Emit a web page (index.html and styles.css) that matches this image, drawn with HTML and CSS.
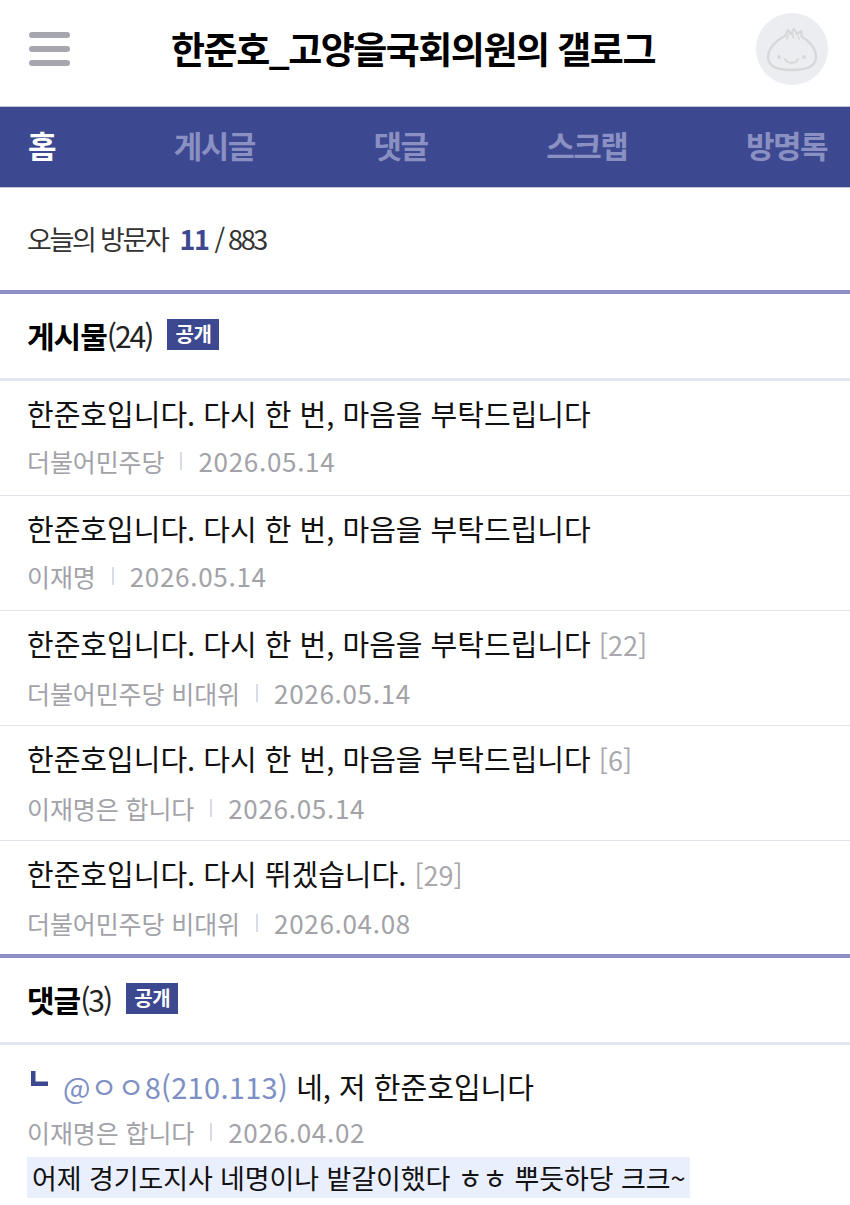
FILE: index.html
```html
<!DOCTYPE html>
<html lang="ko">
<head>
	<meta charset="UTF-8">
	<meta name="viewport" content="width=device-width, initial-scale=1.0">
	<title>한준호_고양을국회의원의 갤로그</title>
	<link rel="stylesheet" href="styles.css">
</head>
<body>
	<header class="top">
		<div class="menu"><span></span><span></span><span></span></div>
		<h1 class="blogName">한준호_고양을국회의원의 갤로그</h1>
		<div class="avatar">
			<svg width="52" height="46" viewBox="0 0 52 46" fill="none" stroke="#d8d8da" stroke-width="2.4" stroke-linecap="round" stroke-linejoin="round">
				<path d="M19 10 L22 4 L25 8 L28 3 L31 8 L35 5 L36 11 C44 15 50 23 50 31 C50 40 42 44 26 44 C10 44 2 40 2 31 C2 23 10 14 19 10 Z"/>
				<path d="M21 13 L22 9 M27 12 L27 8 M33 13 L32 10" stroke-width="1.6"/>
				<path d="M19 33 C21 38 30 38 32 33" stroke-width="2"/>
				<circle cx="13" cy="31" r="2" fill="#d8d8da" stroke="none"/>
				<circle cx="38" cy="31" r="2" fill="#d8d8da" stroke="none"/>
			</svg>
		</div>
	</header>

	<nav class="tabs">
		<div class="tab active">홈</div>
		<div class="tab">게시글</div>
		<div class="tab">댓글</div>
		<div class="tab">스크랩</div>
		<div class="tab">방명록</div>
	</nav>

	<div class="visitors">
		<span class="visitLabel">오늘의 방문자</span>
		<strong class="today">11</strong>
		<span class="total">/ 883</span>
	</div>

	<section class="block">
		<div class="blockHead">
			<h2>게시물<span class="count">(24)</span></h2>
			<span class="badge">공개</span>
		</div>
		<ul class="posts">
			<li>
				<div class="postTitle">한준호입니다. 다시 한 번, 마음을 부탁드립니다</div>
				<div class="meta"><span class="author">더불어민주당</span><i class="sep"></i><span class="date">2026.05.14</span></div>
			</li>
			<li>
				<div class="postTitle">한준호입니다. 다시 한 번, 마음을 부탁드립니다</div>
				<div class="meta"><span class="author">이재명</span><i class="sep"></i><span class="date">2026.05.14</span></div>
			</li>
			<li>
				<div class="postTitle">한준호입니다. 다시 한 번, 마음을 부탁드립니다 <span class="reply">[22]</span></div>
				<div class="meta"><span class="author">더불어민주당 비대위</span><i class="sep"></i><span class="date">2026.05.14</span></div>
			</li>
			<li>
				<div class="postTitle">한준호입니다. 다시 한 번, 마음을 부탁드립니다 <span class="reply">[6]</span></div>
				<div class="meta"><span class="author">이재명은 합니다</span><i class="sep"></i><span class="date">2026.05.14</span></div>
			</li>
			<li>
				<div class="postTitle">한준호입니다. 다시 뛰겠습니다. <span class="reply">[29]</span></div>
				<div class="meta"><span class="author">더불어민주당 비대위</span><i class="sep"></i><span class="date">2026.04.08</span></div>
			</li>
		</ul>
	</section>

	<section class="block">
		<div class="blockHead">
			<h2>댓글<span class="count">(3)</span></h2>
			<span class="badge">공개</span>
		</div>
		<div class="comment">
			<div class="postTitle commentLine">
				<svg class="arrow" width="17" height="15" viewBox="0 0 17 15"><path d="M0 0 H4.500 V10.500 H17 V15 H0 Z" fill="#3c4890"/></svg>
				<div><span class="mention">@ㅇㅇ8(210.113)</span> 네, 저 한준호입니다</div>
			</div>
			<div class="meta"><span class="author">이재명은 합니다</span><i class="sep"></i><span class="date">2026.04.02</span></div>
			<div class="origin">어제 경기도지사 네명이나 밭갈이했다 ㅎㅎ 뿌듯하당 크크~</div>
		</div>
	</section>
</body>
</html>
```

FILE: styles.css
```css
* {
	box-sizing: border-box;
}

body {
	margin: 0;
	background: #fff;
	color: #000;
	font-family: "Noto Sans CJK KR", "Noto Sans", sans-serif;
	overflow: hidden;
}

h1, h2, ul {
	margin: 0;
	padding: 0;
}

.top {
	display: flex;
	align-items: center;
	justify-content: space-between;
	height: 107px;
	padding: 0 22px 8px 29px;
	border-bottom: 1px solid #c4c7dc;
}

.menu {
	display: flex;
	flex-direction: column;
	gap: 8px;
	width: 41px;
}

.menu span {
	height: 6px;
	border-radius: 3px;
	background: #a6a6ae;
}

.blogName {
	margin: 0 0 3px 0;
	font-size: 37px;
	font-weight: 700;
	letter-spacing: -1.5px;
	line-height: 50px;
}

.avatar {
	display: flex;
	align-items: center;
	justify-content: center;
	width: 72px;
	height: 72px;
	border-radius: 50%;
	background: #ecedf0;
}

.tabs {
	display: flex;
	align-items: center;
	justify-content: space-between;
	height: 81px;
	padding: 0 23px 4px 28px;
	background: #3c4890;
	border-bottom: 1px solid #c4c7dc;
}

.tab {
	color: #8a90c2;
	font-size: 31px;
	font-weight: 700;
	letter-spacing: -1.5px;
	line-height: 40px;
}

.tab.active {
	color: #fff;
}

.visitors {
	display: flex;
	align-items: center;
	height: 102px;
	padding: 0 0 2px 27px;
	font-size: 27px;
	letter-spacing: -2.3px;
	color: #333;
}

.today {
	margin-left: 12px;
	color: #3c4890;
	letter-spacing: -1.5px;
}

.total {
	margin-left: 6px;
}

.block {
	border-top: 4px solid #8a90c2;
}

.blockHead {
	display: flex;
	align-items: center;
	height: 87px;
	padding: 0 0 3px 27px;
	border-bottom: 3px solid #e3e5f0;
}

.blockHead h2 {
	font-size: 30px;
	font-weight: 700;
	letter-spacing: -1px;
}

.count {
	font-weight: 400;
	letter-spacing: -2px;
	color: #222;
}

.badge {
	display: inline-block;
	margin-left: 15px;
	width: 52px;
	height: 31px;
	background: #3c4890;
	color: #fff;
	font-size: 20px;
	font-weight: 700;
	line-height: 29px;
	text-align: center;
	letter-spacing: -.5px;
}

.posts {
	list-style: none;
}

.posts li {
	height: 115px;
	padding: 12px 0 0 27px;
	border-bottom: 1px solid #e0e3ea;
}

.posts li:last-child {
	border-bottom: 0;
	height: 113px;
}

.postTitle {
	font-size: 29px;
	line-height: 40px;
	color: #111;
}

.reply {
	color: #a8a8ae;
	font-size: 27px;
}

.meta {
	display: flex;
	align-items: center;
	margin-top: 9px;
	color: #a2a2a8;
	line-height: 38px;
}

.author {
	font-size: 25px;
	letter-spacing: -.1px;
}

.date {
	font-size: 26px;
	letter-spacing: .7px;
}

.sep {
	width: 2px;
	height: 18px;
	margin: 0 16px;
	background: #d8dbe8;
}

.comment {
	padding: 21px 0 0 27px;
}

.commentLine {
	display: flex;
}

.arrow {
	flex-shrink: 0;
	margin: 5px 15px 0 4px;
}

.mention {
	color: #7d8fc4;
	letter-spacing: .3px;
}

.comment .meta {
	margin-top: 7px;
}

.origin {
	display: inline-block;
	margin-top: 6px;
	padding: 0 5px;
	background: #eaeffd;
	font-size: 27px;
	line-height: 41px;
	letter-spacing: -.1px;
	color: #111;
}
```
